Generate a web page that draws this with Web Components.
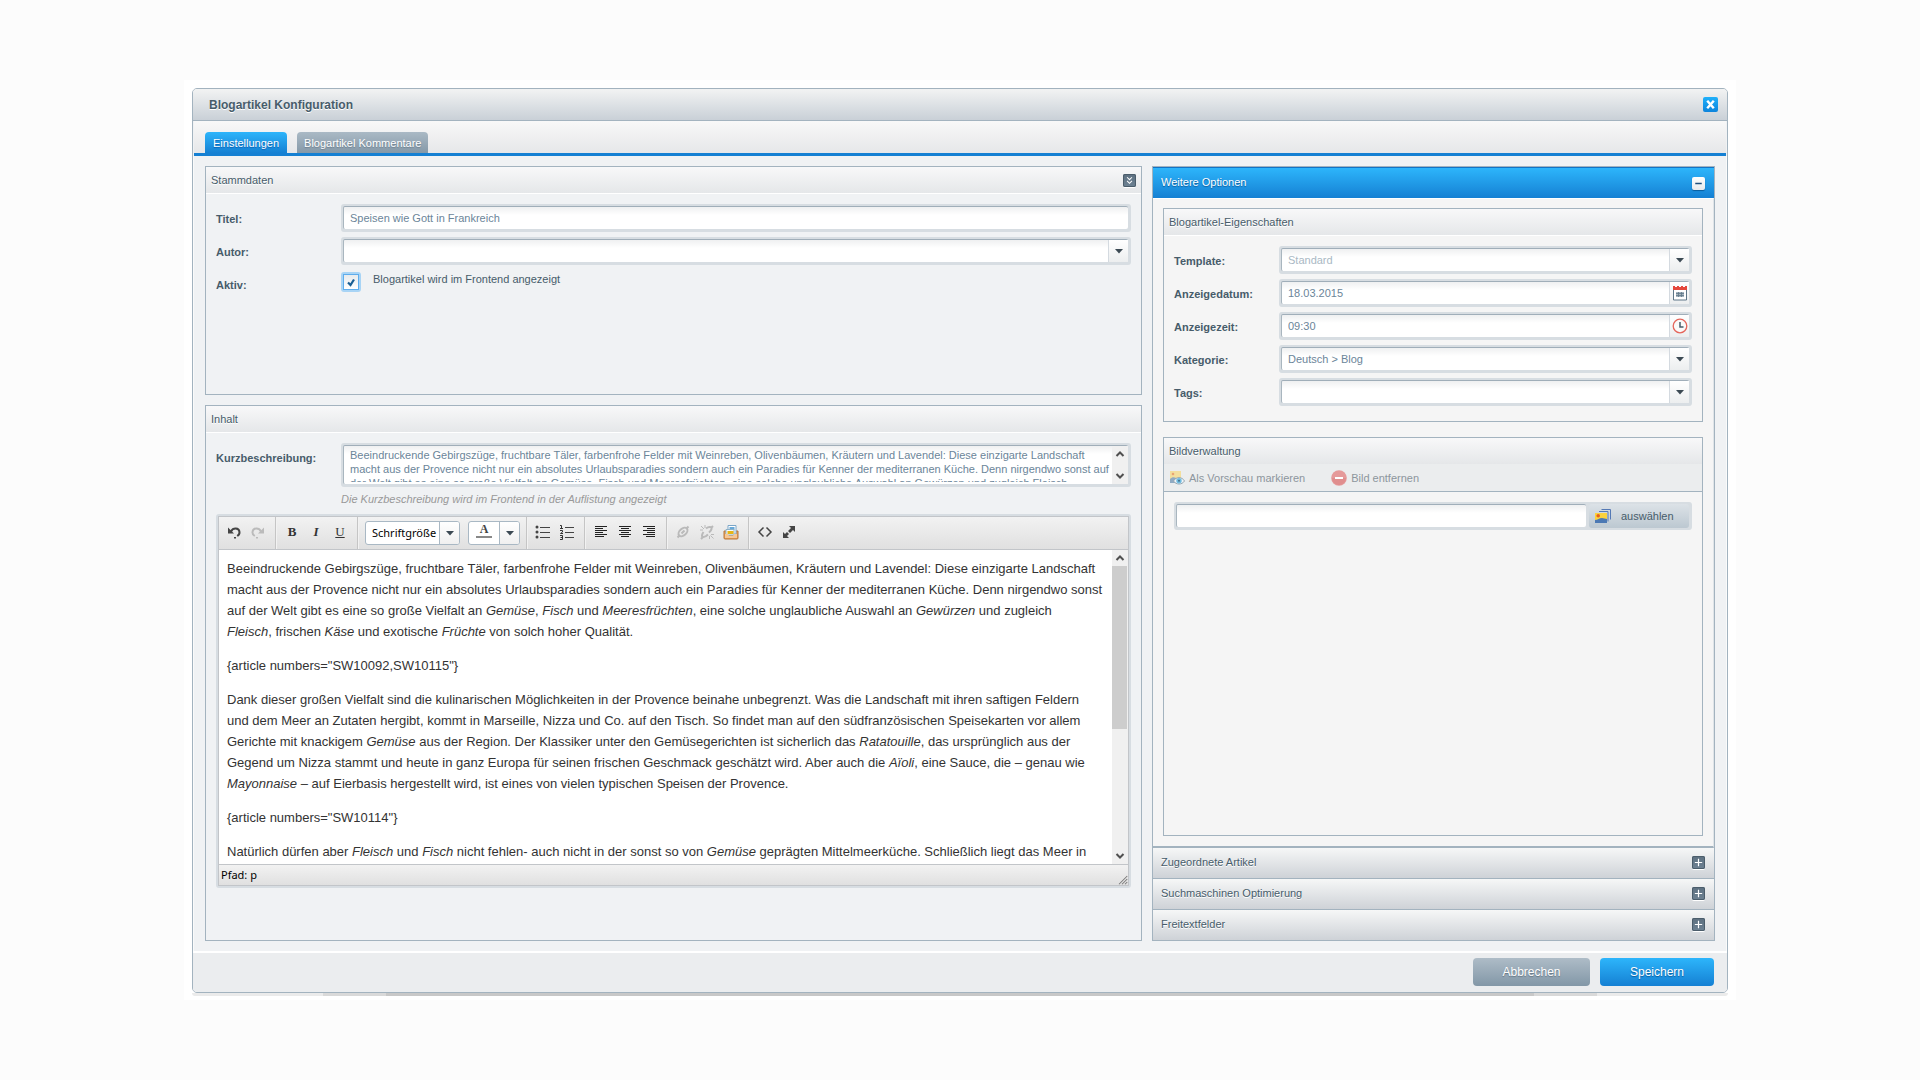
<!DOCTYPE html>
<html lang="de">
<head>
<meta charset="utf-8">
<title>Blogartikel Konfiguration</title>
<style>
  :root {
    --line: #a3b3bf;
    --ink: #475c6a;
    --ring: #d7dde2;
    --blue-top: #2db5fb;
    --blue-end: #1580d3;
  }
  html, body { height: 100%; }
  body {
    margin: 0;
    box-sizing: border-box;
    padding: 80px 184px;
    background: #fcfcfc;
    color: var(--ink);
    font: 11px/14px "Liberation Sans", Arial, sans-serif;
  }
</style>
</head>
<body>
<blog-window></blog-window>

<script>
const ICONS = {
  undo: '<path d="M5 7.500C7 3.500 13 3.500 13.500 8c.2 2-1 3.200-2.300 4" fill="none" stroke="#444" stroke-width="2"/><path d="M2 3.500v6h6z" fill="#444"/><rect x="8" y="13" width="2" height="1.500" fill="#444"/>',
  redo: '<path d="M11 7.500C9 3.500 3 3.500 2.500 8c-.2 2 1 3.200 2.300 4" fill="none" stroke="#bbb" stroke-width="2"/><path d="M14 3.500v6h-6z" fill="#bbb"/><rect x="6" y="13" width="2" height="1.500" fill="#bbb"/>',
  bullets: '<g fill="#444"><circle cx="2" cy="3" r="1.500"/><circle cx="2" cy="8" r="1.500"/><circle cx="2" cy="13" r="1.500"/><path d="M5 3h10v1H5zM5 8h10v1H5zM5 13h10v1H5z"/></g>',
  numbers: '<g fill="none" stroke="#333"><path d="M1 1.500h1.500v3M1 4.500h3M1 6.500h2.500v1.500L1.500 9.500H4M1 11.500h2.500v4H1M1.500 13.500h2"/></g><path d="M6 3h9v1H6zM6 8h9v1H6zM6 13h9v1H6z" fill="#444"/>',
  left: '<path d="M2 2h12v1H2zM2 4h8v1H2zM2 6h12v1H2zM2 8h8v1H2zM2 10h12v1H2zM2 12h9v1H2z" fill="#222"/>',
  center: '<path d="M2 2h12v1H2zM4 4h8v1H4zM2 6h12v1H2zM4 8h8v1H4zM2 10h12v1H2zM4 12h8v1H4z" fill="#222"/>',
  right: '<path d="M2 2h12v1H2zM6 4h8v1H6zM2 6h12v1H2zM6 8h8v1H6zM2 10h12v1H2zM5 12h9v1H5z" fill="#222"/>',
  link: '<g fill="none" stroke="#bababa" stroke-width="2"><ellipse cx="8" cy="8" rx="5.200" ry="3.300" transform="rotate(-42 8 8)"/><path d="M2.500 13.500l2-2M11.500 4.500l2-2M6.500 9.500l3-3"/></g>',
  unlink: '<g fill="none" stroke="#bababa" stroke-width="2"><path d="M7 4.500c2-1.500 6-2.500 5.500.500-.3 1.500-1.500 2.500-2.500 3.500M4.500 8C3 10 2 13 4.500 13c1.500 0 3-1 4.500-2.500"/><path d="M12 4l2-2M2 15l2-2"/></g><g stroke="#bababa"><path d="M2 2l3 3M1 6h3M6 1v3M14.500 14.500l-3-3M15 10.500h-3M10.500 15v-3"/></g>',
  archive: '<path d="M1 7h14v7a1 1 0 0 1-1 1H2a1 1 0 0 1-1-1z" fill="#e9a35a" stroke="#b8763a"/><path d="M5 1.500h8V10H5z" fill="#fff" stroke="#7aa6c8"/><path d="M6.500 3h5v3h-5z" fill="#69a9d8"/><path d="M3 5.500h8V11H3z" fill="#f5fafd" stroke="#8fb2c8"/><path d="M4.500 7h6v3h-6z" fill="#e7b514"/><path d="M2 10h3l1 2h4l1-2h3v4H2z" fill="#f6c795"/>',
  code: '<path d="M6.500 3.500L2 8l4.500 4.500M9.500 3.500L14 8l-4.500 4.500" fill="none" stroke="#444" stroke-width="1.500"/>',
  expand: '<path d="M8 2h6v6l-2-2-3 3-2-2 3-3zM8 14H2V8l2 2 2-2 2 2-2 2z" fill="#444"/>',
  calendar: '<path d="M1.500 4h13v11h-13z" fill="#fff" stroke="#5f7687"/><path d="M1 1h2v1h2V1h2v1h2V1h2v1h2V1h2v4H1z" fill="#e5483d"/><path d="M4 7h8v5H4z" fill="#a9b6bf"/><path d="M4 8.500h8M4 10.500h8M6.500 7v5M9.500 7v5" stroke="#61798a" stroke-width=".8"/>',
  clock: '<circle cx="8" cy="8" r="6.800" fill="#fafafa" stroke="#e5655b" stroke-width="1.300"/><path d="M8 4v5h3.500" fill="none" stroke="#475c6a" stroke-width="1.500"/>',
  preview: '<g opacity=".6"><path d="M1 1h11v8H1z" fill="#f9d76a"/><circle cx="4" cy="4" r="1.300" fill="#e87422"/><path d="M1 9c2-2 4-2 6-1l1 5H1z" fill="#5580a8"/></g><path d="M4.500 11c2.500-4.500 8.500-4.500 11 0-2.500 4-8.500 4-11 0z" fill="#f3f6f8" stroke="#94a5b1"/><circle cx="10" cy="10.700" r="2.700" fill="#6fbbe0"/><circle cx="10" cy="10.700" r="1" fill="#466e85"/>',
  remove: '<circle cx="8" cy="8" r="7.800" fill="#e59a9a"/><path d="M1 8a7 7 0 0 0 14 0z" fill="#e08e8e"/><path d="M4 7h8v2H4z" fill="#fff"/>',
  images: '<path d="M6.500 1.500h9v10M4 3.500h9v10" fill="none" stroke="#5479b5"/><path d="M0 5h12v10H0z" fill="#fbd23e"/><circle cx="3.200" cy="7.800" r="1.800" fill="#e8611d"/><path d="M0 12c3 0 4-2 7-2l5 1v4H0z" fill="#4c79b4"/>',
  caret: '<path d="M4 6h8l-4 4.500z" fill="#3c4a54"/>',
  up: '<path d="M4.500 10l3.500-3.500 3.500 3.500" fill="none" stroke="#505050" stroke-width="2"/>',
  down: '<path d="M4.500 6l3.500 3.500 3.500-3.500" fill="none" stroke="#505050" stroke-width="2"/>',
  close: '<path d="M4.500 4l7 8M11.500 4l-7 8" stroke="#fff" stroke-width="2.600"/>',
  fold: '<path d="M5 4l3 3 3-3M5 8.500l3 3 3-3" fill="none" stroke="#fff" stroke-width="1.300"/>',
  plus: '<path d="M3.500 8h9M8 3.500v9" stroke="#fff" stroke-width="1.500"/>',
  minus: '<path d="M4 7h8v2H4z" fill="#1f4f7d"/>',
  grip: '<path d="M4 15L15 4M8 15l7-7M12 15l3-3" stroke="#777" stroke-width="1.400"/>'
};

function define(name, css, html) {
  const tpl = document.createElement('template');
  tpl.innerHTML = '<style>*{box-sizing:border-box}:host{box-sizing:border-box}button,input,select,textarea{font:inherit;color:inherit;margin:0;padding:0;border:0;border-radius:0;background:none;outline:0;min-width:0}' + css + '</style>' + (typeof html === 'string' ? html : '');
  customElements.define(name, class extends HTMLElement {
    constructor() {
      super();
      this.attachShadow({ mode: 'open' }).append(tpl.content.cloneNode(true));
    }
    connectedCallback() {
      if (typeof html === 'function' && !this.ready) {
        this.ready = true;
        const part = document.createElement('template');
        part.innerHTML = html(this);
        this.shadowRoot.append(part.content);
      }
    }
  });
}
const attr = (el, name) => el.getAttribute(name) || '';

define('ui-icon', ':host{display:block;width:16px;height:16px;flex:none}svg{display:block;width:100%;height:100%}',
  el => `<svg viewBox="0 0 16 16" aria-hidden="true">${ICONS[attr(el, 'name')]}</svg>`);

/* small square tool button in panel headers */
define('tool-button', `
  :host{display:block;flex:none}
  button{display:block;width:13px;height:13px;border-radius:2px;background:linear-gradient(#5d7080,#6e8293);box-shadow:inset 0 0 0 1px #4b5d6b,0 1px 0 #fff}
  :host([kind=minus]) button{background:linear-gradient(#fff,#e6e9ec);box-shadow:0 1px 1px #0b5c9c}
  :host([kind=close]) button{width:15px;height:15px;background:linear-gradient(#1fb0fa,#0d84dc);box-shadow:none}
  ui-icon{width:100%;height:100%}`,
  el => `<button type="button" aria-label="${attr(el, 'label')}"><ui-icon name="${attr(el, 'kind')}"></ui-icon></button>`);

/* titled group box */
define('field-group', `
  :host{display:flex;flex-direction:column;border:1px solid var(--line);min-height:0}
  header{height:27px;flex:none;display:flex;align-items:center;justify-content:space-between;padding:0 5px;border-bottom:1px solid #fff;background:linear-gradient(#f8f8f9,#e5e7e9);text-shadow:0 1px 0 #fff}
  :host([bar]) header{border-bottom-color:#ebedee}
  ::slotted([slot=bar]){border-bottom:1px solid var(--line)}
  .body{flex:1;min-height:0;display:flex;flex-direction:column;gap:5px;padding:10px 10px 15px}`,
  el => `<header><span>${attr(el, 'title-text')}</span><slot name="tool"></slot></header><slot name="bar"></slot><div class="body"><slot></slot></div>`);

/* framed box shared by all text fields */
define('field-frame', `
  :host{display:flex;flex:1;min-width:0;height:28px;padding:2px 3px 3px 2px;border-radius:3px;background:var(--ring)}
  .in{flex:1;min-width:0;display:flex;border-radius:2px;border-top:1px solid #a0aeb9;border-left:1px solid #a9b6bf;background:linear-gradient(#eff0f1,#fff 8px)}
  :host([tall]){height:44px}`,
  '<div class="in"><slot></slot></div><slot name="after"></slot>');

define('form-field', `
  :host{display:flex;align-items:flex-start}
  label{width:var(--label,125px);flex:none;font-weight:bold;padding-top:8px}
  input,select{flex:1;padding:0 0 1px 6px;color:#6b8599;appearance:none}
  :host([muted]) select{color:#a9b8c4}
  .trigger{width:20px;flex:none;display:flex;align-items:center;justify-content:center;border-left:1px solid #d4dae0;background:linear-gradient(#fff,#eceeef)}`,
  el => {
    const kind = attr(el, 'kind'), value = attr(el, 'value');
    const control = kind === 'select'
      ? `<select id="c"><option>${value}</option></select>`
      : `<input id="c" type="text" value="${value}">`;
    const icon = kind === 'select' ? 'caret' : attr(el, 'icon');
    return `<label for="c">${attr(el, 'label')}</label><field-frame>${control}${icon ? `<span class="trigger"><ui-icon name="${icon}"></ui-icon></span>` : ''}</field-frame>`;
  });

define('check-field', `
  :host{display:flex;align-items:flex-start;height:28px}
  .name{width:125px;flex:none;font-weight:bold;padding-top:8px}
  .box{display:grid;margin-top:2px;width:20px;height:20px;border-radius:3px;background:#a8d4f5;padding:2px}
  .box>*{grid-area:1/1}
  input{appearance:none;width:16px;height:16px;border:1px solid #5fadec;background:linear-gradient(#e8ebed,#fff)}
  svg{width:16px;height:16px;pointer-events:none}
  .text{padding:2px 0 0 12px}`,
  '<label class="name" for="c">Aktiv:</label><span class="box"><input id="c" type="checkbox" checked><svg viewBox="0 0 16 16"><path d="M5 8.500l2.500 2.500 3.500-5.500" fill="none" stroke="#1a5f94" stroke-width="2.200"/></svg></span><label class="text" for="c">Blogartikel wird im Frontend angezeigt</label>');

define('scroll-bar', `
  :host{display:flex;flex-direction:column;justify-content:space-between;width:16px;flex:none;background:#f0f0f0}
  .thumb{flex:none;height:163px;width:15px;background:#cdcdcd;margin-bottom:auto}
  :host([short]) .thumb{display:none}`,
  '<ui-icon name="up"></ui-icon><div class="thumb"></div><ui-icon name="down"></ui-icon>');

define('summary-field', `
  :host{display:block}
  .row{display:flex;align-items:flex-start}
  .row>label{width:125px;flex:none;font-weight:bold;padding-top:8px}
  textarea{flex:1;resize:none;overflow:hidden;padding:2px 0 0 6px;height:36px;color:#6b8599;white-space:pre;line-height:14px}
  .hint{margin:5px 0 0 125px;font-style:italic;color:#999}`,
  `<div class="row"><label for="c">Kurzbeschreibung:</label><field-frame tall><textarea id="c">Beeindruckende Gebirgszüge, fruchtbare Täler, farbenfrohe Felder mit Weinreben, Olivenbäumen, Kräutern und Lavendel: Diese einzigarte Landschaft
macht aus der Provence nicht nur ein absolutes Urlaubsparadies sondern auch ein Paradies für Kenner der mediterranen Küche. Denn nirgendwo sonst auf
der Welt gibt es eine so große Vielfalt an Gemüse, Fisch und Meeresfrüchten, eine solche unglaubliche Auswahl an Gewürzen und zugleich Fleisch,</textarea><scroll-bar short></scroll-bar></field-frame></div>
  <div class="hint">Die Kurzbeschreibung wird im Frontend in der Auflistung angezeigt</div>`);

define('edit-button', `
  :host{display:block}
  button{display:flex;width:24px;height:24px;align-items:center;justify-content:center;font:bold 13px/16px "Liberation Serif",serif;color:#333}`,
  el => `<button type="button" aria-label="${attr(el, 'label')}">${attr(el, 'icon') ? `<ui-icon name="${attr(el, 'icon')}"></ui-icon>` : '<slot></slot>'}</button>`);

define('text-editor', `
  :host{display:flex;flex-direction:column;border:2px solid var(--ring);border-radius:3px;height:374px;flex:none}
  .frame{flex:1;min-height:0;display:flex;flex-direction:column;border:1px solid #c2c5c9;background:#fff}
  .bar{flex:none;height:33px;display:flex;padding-left:3px;border-bottom:1px solid #c2c5c9;background:linear-gradient(#f2f2f2,#e0e0e0);color:#000}
  .group{display:flex;padding:3px 5px 0 4px;border-right:1px solid #c5c5c5;box-shadow:1px 0 0 #f2f2f2}
  .group:first-child{padding-left:0}
  .group.combos{gap:8px;padding:4px 6px 0 7px}
  .group:last-child{border:0;box-shadow:none}
  .combo{height:24px;display:flex;border:1px solid #a9b8c4;border-radius:3px;background:#fff}
  .combo select{appearance:none;width:73px;padding-left:6px;font:11px/16px "Noto Sans",sans-serif}
  .arrow{width:20px;flex:none;display:flex;align-items:center;justify-content:center;border-left:1px solid #a9b8c4;background:linear-gradient(#fff,#f0f0f0);border-radius:0 2px 2px 0}
  .color{width:30px;display:flex;flex-direction:column;align-items:center;font:bold 12px/14px "Liberation Serif",serif;color:#444}
  .color i{width:16px;height:2px;background:#888}
  .view{flex:1;min-height:0;display:flex}
  .doc{flex:1;min-width:0;overflow:hidden;padding:8px 0 0 8px;font-size:13px;line-height:21px;color:#333;white-space:nowrap}
  p{margin:0 0 13px}
  footer{flex:none;height:21px;display:flex;align-items:flex-start;justify-content:space-between;padding:2px 0 0 2px;border-top:1px solid #c2c5c9;background:linear-gradient(#f2f2f2,#e0e0e0);font:11px/16px "Noto Sans",sans-serif;color:#000}
  footer ui-icon{width:12px;height:12px;align-self:flex-end}
  .i{font-style:italic}.u{text-decoration:underline;font-weight:normal}`,
  `<div class="frame">
  <div class="bar" role="toolbar">
    <div class="group"><edit-button icon="undo" label="Rückgängig"></edit-button><edit-button icon="redo" label="Wiederholen"></edit-button></div>
    <div class="group"><edit-button label="Fett">B</edit-button><edit-button label="Kursiv"><span class="i">I</span></edit-button><edit-button label="Unterstrichen"><span class="u">U</span></edit-button></div>
    <div class="group combos"><span class="combo"><select aria-label="Schriftgröße"><option>Schriftgröße</option></select><span class="arrow"><ui-icon name="caret"></ui-icon></span></span><span class="combo"><button type="button" class="color" aria-label="Textfarbe">A<i></i></button><span class="arrow"><ui-icon name="caret"></ui-icon></span></span></div>
    <div class="group"><edit-button icon="bullets" label="Liste"></edit-button><edit-button icon="numbers" label="Nummerierung"></edit-button></div>
    <div class="group"><edit-button icon="left" label="Links"></edit-button><edit-button icon="center" label="Zentriert"></edit-button><edit-button icon="right" label="Rechts"></edit-button></div>
    <div class="group"><edit-button icon="link" label="Link"></edit-button><edit-button icon="unlink" label="Link entfernen"></edit-button><edit-button icon="archive" label="Medien"></edit-button></div>
    <div class="group"><edit-button icon="code" label="Quelltext"></edit-button><edit-button icon="expand" label="Vollbild"></edit-button></div>
  </div>
  <div class="view"><div class="doc">
    <p>Beeindruckende Gebirgszüge, fruchtbare Täler, farbenfrohe Felder mit Weinreben, Olivenbäumen, Kräutern und Lavendel: Diese einzigarte Landschaft<br>macht aus der Provence nicht nur ein absolutes Urlaubsparadies sondern auch ein Paradies für Kenner der mediterranen Küche. Denn nirgendwo sonst<br>auf der Welt gibt es eine so große Vielfalt an <em>Gemüse</em>, <em>Fisch</em> und <em>Meeresfrüchten</em>, eine solche unglaubliche Auswahl an <em>Gewürzen</em> und zugleich<br><em>Fleisch</em>, frischen <em>Käse</em> und exotische <em>Früchte</em> von solch hoher Qualität.</p>
    <p>{article numbers="SW10092,SW10115"}</p>
    <p>Dank dieser großen Vielfalt sind die kulinarischen Möglichkeiten in der Provence beinahe unbegrenzt. Was die Landschaft mit ihren saftigen Feldern<br>und dem Meer an Zutaten hergibt, kommt in Marseille, Nizza und Co. auf den Tisch. So findet man auf den südfranzösischen Speisekarten vor allem<br>Gerichte mit knackigem <em>Gemüse</em> aus der Region. Der Klassiker unter den Gemüsegerichten ist sicherlich das <em>Ratatouille</em>, das ursprünglich aus der<br>Gegend um Nizza stammt und heute in ganz Europa für seinen frischen Geschmack geschätzt wird. Aber auch die <em>Aïoli</em>, eine Sauce, die – genau wie<br><em>Mayonnaise</em> – auf Eierbasis hergestellt wird, ist eines von vielen typischen Speisen der Provence.</p>
    <p>{article numbers="SW10114"}</p>
    <p>Natürlich dürfen aber <em>Fleisch</em> und <em>Fisch</em> nicht fehlen- auch nicht in der sonst so von <em>Gemüse</em> geprägten Mittelmeerküche. Schließlich liegt das Meer in</p>
  </div><scroll-bar></scroll-bar></div>
  <footer><span>Pfad: p</span><ui-icon name="grip"></ui-icon></footer>
  </div>`);

define('image-bar', `
  :host{display:flex;align-items:center;gap:26px;height:27px;flex:none;padding:0 5px;background:#ebedee}
  button{display:flex;align-items:center;gap:4px;color:#8d969d}`,
  `<button type="button" disabled><ui-icon name="preview"></ui-icon>Als Vorschau markieren</button><button type="button" disabled><ui-icon name="remove"></ui-icon>Bild entfernen</button>`);

define('media-field', `
  :host{display:flex}
  input{flex:1;padding-left:6px}
  button{width:100px;height:24px;margin-left:3px;display:flex;align-items:center;gap:10px;padding-left:6px;border-radius:3px;background:linear-gradient(#dce2e7,#bcc8d1);color:#475c6a}`,
  `<field-frame><input type="text" aria-label="Bild"><button type="button" slot="after"><ui-icon name="images"></ui-icon>auswählen</button></field-frame>`);

define('accordion-bar', `
  :host{height:31px;flex:none;display:flex;align-items:center;justify-content:space-between;padding:0 9px 2px 8px;border-bottom:1px solid var(--line);background:linear-gradient(#f6f7f7,#ced2d7);text-shadow:0 1px 0 #fff}
  :host(:last-child){border-bottom:0;height:30px}`,
  '<slot></slot><tool-button kind="plus" label="Aufklappen"></tool-button>');

define('options-panel', `
  :host{display:flex;flex-direction:column;border:1px solid var(--line);background:#f5f5f5;min-height:0;--label:105px}
  header{height:31px;flex:none;display:flex;align-items:center;justify-content:space-between;padding:0 9px 2px 8px;border-top:1px solid #1273c4;background:linear-gradient(var(--blue-top),var(--blue-end));color:#fff;text-shadow:0 1px 1px #0b5c9c}
  tool-button{padding-top:2px}
  .body{flex:1;min-height:0;display:flex;flex-direction:column;gap:15px;padding:9px 10px 10px;border-top:1px solid #fff;border-right:1px solid #dfe4e8;border-bottom:2px solid var(--line)}
  .grow{flex:1}`,
  `<header><span>Weitere Optionen</span><tool-button kind="minus" label="Zuklappen"></tool-button></header>
  <div class="body">
    <field-group title-text="Blogartikel-Eigenschaften">
      <form-field label="Template:" kind="select" value="Standard" muted></form-field>
      <form-field label="Anzeigedatum:" value="18.03.2015" icon="calendar"></form-field>
      <form-field label="Anzeigezeit:" value="09:30" icon="clock"></form-field>
      <form-field label="Kategorie:" kind="select" value="Deutsch &gt; Blog"></form-field>
      <form-field label="Tags:" kind="select"></form-field>
    </field-group>
    <field-group class="grow" title-text="Bildverwaltung" bar><image-bar slot="bar"></image-bar><media-field></media-field></field-group>
  </div>
  <accordion-bar>Zugeordnete Artikel</accordion-bar>
  <accordion-bar>Suchmaschinen Optimierung</accordion-bar>
  <accordion-bar>Freitextfelder</accordion-bar>`);

define('tab-bar', `
  :host{display:flex;align-items:flex-end;gap:10px;height:35px;flex:none;margin:0 1px;padding-left:11px;border-bottom:3px solid var(--blue-end);background:linear-gradient(#f8f8f8,#e6e7e9)}
  button{height:21px;padding:0 7px;border-radius:4px 4px 0 0;background:linear-gradient(#aab9c5,#8599a8);color:#fff;text-shadow:0 1px 1px #6c7f8e}
  button[aria-selected=true]{padding:0 8px;background:linear-gradient(var(--blue-top),var(--blue-end));text-shadow:0 1px 1px #0b5fb0}`,
  '<button type="button" role="tab" aria-selected="true">Einstellungen</button><button type="button" role="tab" aria-selected="false">Blogartikel Kommentare</button>');

define('action-button', `
  :host{display:block}
  button{height:28px;width:117px;border-radius:4px;font-size:12px;color:#fff;background:linear-gradient(#aebcc7,#8297a7);text-shadow:0 1px 1px #647684}
  :host([primary]) button{width:114px;background:linear-gradient(var(--blue-top),var(--blue-end));text-shadow:0 1px 1px #0b5c9c}`,
  '<button type="button"><slot></slot></button>');

define('blog-window', `
  :host{display:flex;flex-direction:column;height:100%;min-height:900px;padding:8px 8px 3px;background:#fff}
  .window{flex:1;min-height:0;display:flex;flex-direction:column;border:1px solid var(--line);border-radius:5px;background:#f0f2f4;overflow:hidden}
  .head{height:32px;flex:none;display:flex;align-items:center;justify-content:space-between;padding:0 9px 0 16px;border-bottom:1px solid var(--line);background:linear-gradient(#f2f3f3,#c9d0d7);text-shadow:0 1px 0 #fff}
  h1{margin:0;font-size:12px;line-height:16px}
  main{flex:1;min-height:0;display:grid;grid-template-columns:minmax(0,937fr) minmax(0,563fr);gap:10px;padding:10px 11px;border:solid #fafbfb;border-width:0 1px}
  .left{display:grid;grid-template-rows:229px minmax(0,1fr);gap:10px;min-height:0}
  text-editor{margin-top:3px}
  footer{height:41px;flex:none;display:flex;justify-content:flex-end;gap:10px;padding:5px 13px 0;border-top:2px solid #fff;background:#ebedef}
  .shade{height:3px;flex:none;margin-bottom:1px;background:#ebebeb;border-radius:0 0 5px 5px;display:flex;justify-content:center}
  .shade i{width:83%;background:#d9d9d9;display:flex;justify-content:center}
  .shade b{width:90%;background:#c8c8c8}`,
  `<section class="window">
    <div class="head"><h1>Blogartikel Konfiguration</h1><tool-button kind="close" label="Schließen"></tool-button></div>
    <tab-bar role="tablist"></tab-bar>
    <main>
      <div class="left">
        <field-group title-text="Stammdaten"><tool-button slot="tool" kind="fold" label="Einklappen"></tool-button>
          <form-field label="Titel:" value="Speisen wie Gott in Frankreich"></form-field>
          <form-field label="Autor:" kind="select"></form-field>
          <check-field></check-field>
        </field-group>
        <field-group title-text="Inhalt"><summary-field></summary-field><text-editor></text-editor></field-group>
      </div>
      <options-panel></options-panel>
    </main>
    <footer><action-button>Abbrechen</action-button><action-button primary>Speichern</action-button></footer>
  </section>
  <div class="shade"><i><b></b></i></div>`);
</script>
</body>
</html>
